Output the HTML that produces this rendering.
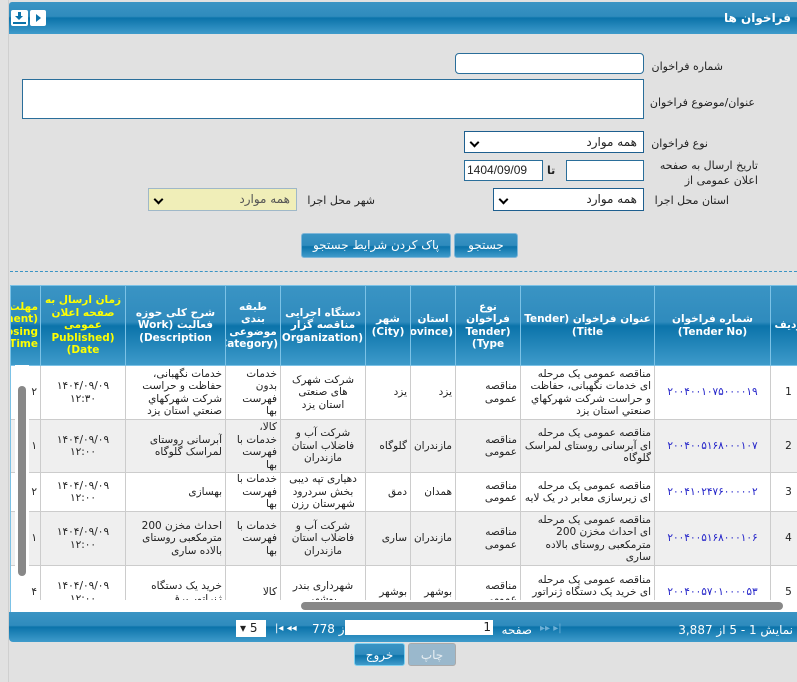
<!DOCTYPE html>
<html><head><meta charset="utf-8"><style>
*{box-sizing:border-box;margin:0;padding:0}
body{width:797px;height:682px;background:#e1e1e1;font-family:"DejaVu Sans","Liberation Sans",sans-serif;font-size:11px;color:#222;position:relative;overflow:hidden}
.abs{position:absolute}
.bar{background:linear-gradient(#3a94c4 0%,#2f8bbd 45%,#0b73aa 50%,#3f9bcb 100%)}
.lbl{position:absolute;direction:rtl;text-align:right;font-size:11px;white-space:nowrap}
.inp{position:absolute;background:#fff;border:1px solid #2a6e9a}
.sel{position:absolute;background:#fff;border:1px solid #1e5f8f;direction:rtl;padding:3px 6px;font-size:12px}
.sel:after{content:"";position:absolute;left:6px;top:7px;width:5px;height:5px;border-right:2px solid #000;border-bottom:2px solid #000;transform:rotate(45deg)}
.btn{position:absolute;color:#fff;border:1px solid #7fb6d8;border-radius:3px;text-align:center;font-size:12px;line-height:22px;background:linear-gradient(#3a94c4 0%,#2f8bbd 50%,#0b73aa 55%,#3f9bcb 100%)}
table{border-collapse:collapse;table-layout:fixed;direction:rtl}
td{border:1px solid #ccc;padding:0 3px;vertical-align:middle;font-size:10.5px;line-height:12.5px;overflow:hidden}
td>div{overflow:hidden;display:flex;align-items:center;justify-content:flex-start}
.r1 td>div{height:53px}.r2 td>div{height:52px}.r3 td>div{height:38px}.r4 td>div{height:53px}.r5 td>div{height:53px}
th{border:1px solid #7cc2e6;color:#fff;font-weight:bold;font-size:10.5px;line-height:12.5px;padding:2px;overflow:hidden;white-space:normal}
.num div{color:#1f1fc8;justify-content:center}
.c div{justify-content:center;text-align:center}
</style></head><body>
<div class="abs" style="left:0;top:0;width:9px;height:682px;background:#e1e1e1;border-right:1px solid #cfcfcf"></div>
<div class="abs bar" style="left:9px;top:2px;width:790px;height:32px;border-radius:3px 0 0 0"></div>
<div class="lbl" style="right:6px;top:11px;color:#fff;font-weight:bold;font-size:12px">فراخوان ها</div>
<div class="abs" style="left:11px;top:10px;width:17px;height:16px;background:#fff;border-radius:2px"><div class="abs" style="left:7px;top:2px;width:3px;height:6px;background:#0b73aa"></div><div class="abs" style="left:4px;top:6px;border:4px solid transparent;border-top:4px solid #0b73aa;border-bottom:0"></div><div class="abs" style="left:2px;top:12px;width:13px;height:2px;background:#0b73aa"></div></div>
<div class="abs" style="left:30px;top:10px;width:16px;height:16px;background:#fff;border-radius:2px"><div class="abs" style="left:6px;top:4px;border:4px solid transparent;border-left:5px solid #0b73aa;border-right:0"></div></div>

<div class="lbl" style="right:74px;top:60px">شماره فراخوان</div>
<div class="inp" style="left:455px;top:53px;width:189px;height:21px;border-radius:4px"></div>
<div class="lbl" style="right:42px;top:96px">عنوان/موضوع فراخوان</div>
<div class="inp" style="left:22px;top:79px;width:622px;height:40px"></div>
<div class="lbl" style="right:89px;top:137px">نوع فراخوان</div>
<div class="sel" style="left:464px;top:131px;width:180px;height:22px">همه موارد</div>
<div class="lbl" style="right:39px;top:158px;width:120px;line-height:15px;white-space:normal">تاریخ ارسال به صفحه اعلان عمومی از</div>
<div class="inp" style="left:566px;top:160px;width:78px;height:21px"></div>
<div class="lbl" style="left:547px;top:164px;font-weight:bold">تا</div>
<div class="inp" style="left:464px;top:160px;width:79px;height:21px;font-size:12px;padding:2px 2px;font-family:'Liberation Sans',sans-serif">1404/09/09</div>
<div class="lbl" style="right:68px;top:194px">استان محل اجرا</div>
<div class="sel" style="left:493px;top:188px;width:151px;height:23px">همه موارد</div>
<div class="lbl" style="right:422px;top:194px">شهر محل اجرا</div>
<div class="sel" style="left:148px;top:188px;width:149px;height:23px;background:#f0eeb8;border-color:#9fb8c8;color:#555">همه موارد</div>
<div class="btn" style="left:454px;top:233px;width:64px;height:25px">جستجو</div>
<div class="btn" style="left:301px;top:233px;width:150px;height:25px">پاک کردن شرایط جستجو</div>
<div class="abs" style="left:10px;top:271px;width:787px;border-top:1px dashed #3a94c4"></div>

<div class="abs" style="left:10px;top:285px;width:787px;height:327px;background:#fff;overflow:hidden;border-left:1px solid #7cc2e6">
<table style="position:absolute;right:-10px;top:0;width:797px">
<colgroup><col style="width:36px"><col style="width:116px"><col style="width:134px"><col style="width:65px"><col style="width:45px"><col style="width:45px"><col style="width:85px"><col style="width:55px"><col style="width:100px"><col style="width:85px"><col style="width:31px"></colgroup>
<tr class="bar" style="height:80px">
<th>ردیف</th><th>شماره فراخوان (Tender No)</th><th>عنوان فراخوان (Tender Title)</th><th>نوع فراخوان (Tender Type)</th><th>استان (Province)</th><th>شهر (City)</th><th>دستگاه اجرایی مناقصه گزار (Organization)</th><th>طبقه بندی موضوعی (Category)</th><th>شرح کلی حوزه فعالیت (Work Description)</th><th style="color:#ff0">زمان ارسال به صفحه اعلان عمومی (Published Date)</th><th style="color:#ff0">مهلت (Document Closing Time)</th></tr>
<tr class="r1"><td class="c"><div>1</div></td><td class="num"><div>۲۰۰۴۰۰۱۰۷۵۰۰۰۰۱۹</div></td><td><div>مناقصه عمومی یک مرحله ای خدمات نگهبانی، حفاظت و حراست شرکت شهرکهاي صنعتي استان يزد</div></td><td><div>مناقصه عمومی</div></td><td><div>یزد</div></td><td><div>یزد</div></td><td class="c"><div>شرکت شهرک های صنعتی استان یزد</div></td><td><div>خدمات بدون فهرست بها</div></td><td><div>خدمات نگهبانی، حفاظت و حراست شرکت شهرکهاي صنعتي استان يزد</div></td><td class="c"><div>۱۴۰۴/۰۹/۰۹ ۱۲:۳۰</div></td><td><div>۲</div></td></tr>
<tr class="r2" style="background:#efefef"><td class="c"><div>2</div></td><td class="num"><div>۲۰۰۴۰۰۵۱۶۸۰۰۰۱۰۷</div></td><td><div>مناقصه عمومی یک مرحله ای آبرسانی روستای لمراسک گلوگاه</div></td><td><div>مناقصه عمومی</div></td><td><div>مازندران</div></td><td><div>گلوگاه</div></td><td class="c"><div>شرکت آب و فاضلاب استان مازندران</div></td><td><div>کالا، خدمات با فهرست بها</div></td><td><div>آبرسانی روستای لمراسک گلوگاه</div></td><td class="c"><div>۱۴۰۴/۰۹/۰۹ ۱۲:۰۰</div></td><td><div>۱</div></td></tr>
<tr class="r3"><td class="c"><div>3</div></td><td class="num"><div>۲۰۰۴۱۰۲۴۷۶۰۰۰۰۰۲</div></td><td><div>مناقصه عمومی یک مرحله ای زیرسازی معابر در یک لایه</div></td><td><div>مناقصه عمومی</div></td><td><div>همدان</div></td><td><div>دمق</div></td><td class="c"><div>دهیاری تپه دیبی بخش سردرود شهرستان رزن</div></td><td><div>خدمات با فهرست بها</div></td><td><div>بهسازی</div></td><td class="c"><div>۱۴۰۴/۰۹/۰۹ ۱۲:۰۰</div></td><td><div>۲</div></td></tr>
<tr class="r4" style="background:#efefef"><td class="c"><div>4</div></td><td class="num"><div>۲۰۰۴۰۰۵۱۶۸۰۰۰۱۰۶</div></td><td><div>مناقصه عمومی یک مرحله ای احداث مخزن 200 مترمکعبی روستای بالاده ساری</div></td><td><div>مناقصه عمومی</div></td><td><div>مازندران</div></td><td><div>ساری</div></td><td class="c"><div>شرکت آب و فاضلاب استان مازندران</div></td><td><div>خدمات با فهرست بها</div></td><td><div>احداث مخزن 200 مترمکعبی روستای بالاده ساری</div></td><td class="c"><div>۱۴۰۴/۰۹/۰۹ ۱۲:۰۰</div></td><td><div>۱</div></td></tr>
<tr class="r5"><td class="c"><div>5</div></td><td class="num"><div>۲۰۰۴۰۰۵۷۰۱۰۰۰۰۵۳</div></td><td><div>مناقصه عمومی یک مرحله ای خرید یک دستگاه ژنراتور برق</div></td><td><div>مناقصه عمومی</div></td><td><div>بوشهر</div></td><td><div>بوشهر</div></td><td class="c"><div>شهرداری بندر بوشهر</div></td><td><div>کالا</div></td><td><div>خرید یک دستگاه ژنراتور برق</div></td><td class="c"><div>۱۴۰۴/۰۹/۰۹ ۱۲:۰۰</div></td><td><div>۴</div></td></tr>
</table>
<div class="abs" style="left:0;top:315px;width:787px;height:12px;background:#fff"></div>
<div class="abs" style="left:290px;top:317px;width:482px;height:8px;background:#888;border-radius:4px"></div>
<div class="abs" style="left:4px;top:80px;width:14px;height:225px;background:#fff"></div>
<div class="abs" style="left:7px;top:101px;width:8px;height:190px;background:#888;border-radius:4px"></div>
</div>

<div class="abs bar" style="left:9px;top:612px;width:790px;height:30px;border-radius:0 0 0 4px"></div>
<div class="lbl" style="right:4px;top:623px;color:#fff;font-size:12px">نمایش 1 - 5 از 3,887</div>
<div class="lbl" style="right:265px;top:623px;color:#fff;font-size:12px">صفحه</div>
<div class="inp" style="left:345px;top:620px;width:148px;height:15px;border:0;font-size:12px;text-align:right;padding-right:2px;line-height:15px">1</div>
<div class="lbl" style="left:312px;top:622px;color:#fff;font-size:12px">از 778</div>
<div class="lbl" style="left:275px;top:623px;color:#fff;font-size:10px">◂◂ ◂|</div>
<div class="lbl" style="left:540px;top:623px;color:#6fb0d6;font-size:10px">|▸ ▸▸</div>
<div class="inp" style="left:236px;top:620px;width:30px;height:17px;border:0;font-size:12px;padding:1px 4px">▾ 5</div>
<div class="btn" style="left:354px;top:643px;width:51px;height:23px;border-color:#7fd0f0">خروج</div>
<div class="btn" style="left:408px;top:643px;width:48px;height:23px;background:#9ab8cc;border-color:#aaa;color:#e8eef2">چاپ</div>
</body></html>
